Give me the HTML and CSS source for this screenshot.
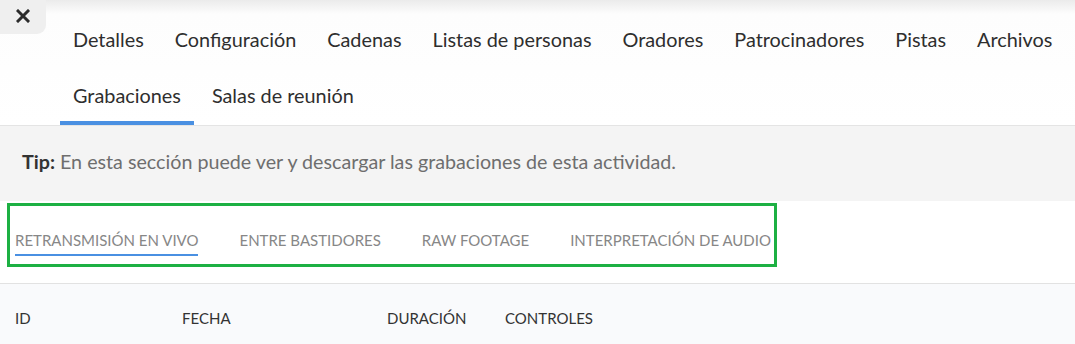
FILE: index.html
```html
<!DOCTYPE html>
<html lang="es">
<head>
    <meta charset="UTF-8">
    <meta name="viewport" content="width=device-width, initial-scale=1.0">
    <title>Grabaciones</title>
    <link rel="stylesheet" href="styles.css">
</head>
<body>
    <div class="header">
        <button class="close-btn" aria-label="Cerrar">
            <svg width="14" height="14" viewBox="0 0 14 14">
                <path d="M2 2 L12 12 M12 2 L2 12" stroke="#2b2b2b" stroke-width="3" stroke-linecap="square"/>
            </svg>
        </button>
        <nav class="tabs">
            <a class="tab" href="#">Detalles</a>
            <a class="tab" href="#">Configuración</a>
            <a class="tab" href="#">Cadenas</a>
            <a class="tab" href="#">Listas de personas</a>
            <a class="tab" href="#">Oradores</a>
            <a class="tab" href="#">Patrocinadores</a>
            <a class="tab" href="#">Pistas</a>
            <a class="tab" href="#">Archivos</a>
            <a class="tab active" href="#">Grabaciones</a>
            <a class="tab" href="#">Salas de reunión</a>
        </nav>
    </div>

    <div class="tip">
        <strong>Tip:</strong> En esta sección puede ver y descargar las grabaciones de esta actividad.
    </div>

    <div class="sub-section">
        <div class="sub-tabs">
            <a class="sub-tab active" href="#">Retransmisión en vivo</a>
            <a class="sub-tab" href="#">Entre bastidores</a>
            <a class="sub-tab" href="#">Raw footage</a>
            <a class="sub-tab" href="#">Interpretación de audio</a>
        </div>
    </div>

    <div class="table-head">
        <div>ID</div>
        <div>Fecha</div>
        <div>Duración</div>
        <div>Controles</div>
    </div>
</body>
</html>
```

FILE: styles.css
```css
* {
    margin: 0;
    padding: 0;
    box-sizing: border-box;
}

body {
    font-family: 'Lato', 'Liberation Sans', sans-serif;
    background-color: #fff;
    color: #333;
    height: 100vh;
    overflow: hidden;
    display: flex;
    flex-direction: column;
}

a {
    text-decoration: none;
    color: inherit;
}

.header {
    position: relative;
    background: linear-gradient(#ebebeb, #fdfdfd 14px, #fff);
    border-bottom: 1px solid #e4e4e4;
}

.close-btn {
    position: absolute;
    top: 0;
    left: 0;
    width: 46px;
    height: 34px;
    border: none;
    background-color: #efefef;
    border-bottom-right-radius: 9px;
    display: flex;
    align-items: center;
    justify-content: center;
    padding-bottom: 3px;
    cursor: pointer;
}

.tabs {
    display: flex;
    flex-wrap: wrap;
    column-gap: 5px;
    padding: 13px 0 0 60px;
}

.tab {
    padding: 0 13px;
    line-height: 52px;
    font-size: 19.85px;
    color: #2e2e2e;
    border-bottom: 4px solid transparent;
}

.tab.active {
    border-bottom-color: #4a90e2;
}

.tip {
    background-color: #f4f4f4;
    padding: 23px 22px 26px;
    font-size: 19.7px;
    line-height: 26px;
    color: #6e6e6e;
}

.tip strong {
    color: #333;
}

.sub-section {
    padding: 2px 0 16px 7px;
    border-bottom: 1px solid #e2e2e2;
}

.sub-tabs {
    display: inline-flex;
    gap: 41px;
    border: 3px solid #1db043;
    padding: 24px 3px 8px 5px;
}

.sub-tab {
    font-size: 15px;
    line-height: 20px;
    text-transform: uppercase;
    color: #878787;
    padding-bottom: 4px;
    border-bottom: 2px solid transparent;
}

.sub-tab.active {
    border-bottom-color: #4a90e2;
}

.table-head {
    flex: 1;
    display: grid;
    grid-template-columns: 167px 205px 118px auto;
    align-content: start;
    padding: 24px 15px;
    background-color: #f9fafc;
    font-size: 15px;
    line-height: 20px;
    text-transform: uppercase;
    color: #333;
}
```
